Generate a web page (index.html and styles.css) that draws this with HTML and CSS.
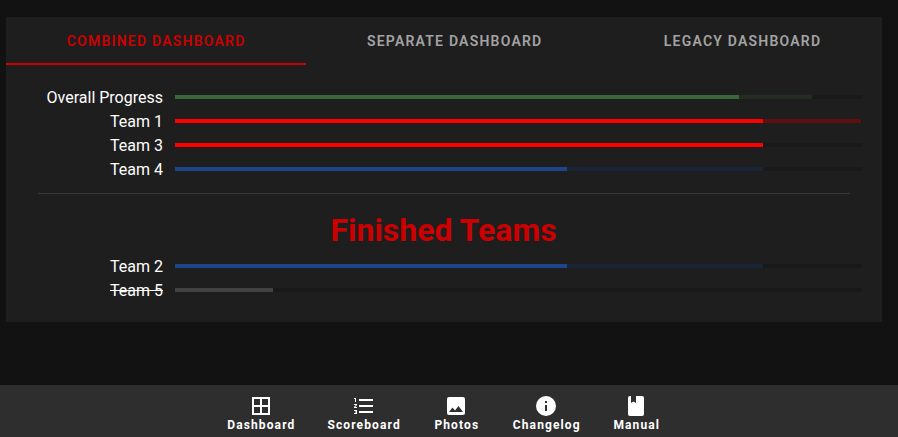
FILE: index.html
```html
<!DOCTYPE html>
<html lang="en">
<head>
<meta charset="utf-8">
<title>Dashboard</title>
<link rel="stylesheet" href="styles.css">
</head>
<body>
<main class="card">
  <div class="tabs" role="tablist">
    <div class="tab active" role="tab">Combined Dashboard</div>
    <div class="tab" role="tab">Separate Dashboard</div>
    <div class="tab" role="tab">Legacy Dashboard</div>
  </div>
  <section class="teams">
    <div class="row"><span class="label">Overall Progress</span><div class="track green"><div class="fill" style="width:82.1%"></div><div class="buffer" style="width:10.6%"></div></div></div>
    <div class="row"><span class="label">Team 1</span><div class="track red"><div class="fill" style="width:85.6%"></div><div class="buffer" style="width:14.2%"></div></div></div>
    <div class="row"><span class="label">Team 3</span><div class="track red"><div class="fill" style="width:85.6%"></div></div></div>
    <div class="row"><span class="label">Team 4</span><div class="track blue"><div class="fill" style="width:57.1%"></div><div class="buffer" style="width:28.5%"></div></div></div>
    <hr class="divider">
    <h1 class="heading">Finished Teams</h1>
    <div class="row"><span class="label">Team 2</span><div class="track blue"><div class="fill" style="width:57.1%"></div><div class="buffer" style="width:28.5%"></div></div></div>
    <div class="row"><span class="label struck">Team 5</span><div class="track grey"><div class="fill" style="width:14.3%"></div></div></div>
  </section>
</main>
<nav class="bottom-nav">
  <a class="nav-item"><svg class="icon" viewBox="0 0 24 24"><path d="M3 3v18h18V3H3zm8 16H5v-6h6v6zm0-8H5V5h6v6zm8 8h-6v-6h6v6zm0-8h-6V5h6v6z"/></svg><span>Dashboard</span></a>
  <a class="nav-item"><svg class="icon" viewBox="0 0 24 24"><path d="M2 17h2v.5H3v1h1v.5H2v1h3v-4H2v1zm1-9h1V4H2v1h1v3zm-1 3h1.8L2 13.1v.9h3v-1H3.2L5 10.9V10H2v1zm5-6v2h14V5H7zm0 14h14v-2H7v2zm0-6h14v-2H7v2z"/></svg><span>Scoreboard</span></a>
  <a class="nav-item"><svg class="icon" viewBox="0 0 24 24"><path d="M21 19V5c0-1.100-.9-2-2-2H5c-1.100 0-2 .9-2 2v14c0 1.100.9 2 2 2h14c1.100 0 2-.9 2-2zM8.500 13.500l2.500 3.010L14.500 12l4.500 6H5l3.500-4.500z"/></svg><span>Photos</span></a>
  <a class="nav-item"><svg class="icon" viewBox="0 0 24 24"><path d="M12 2a10 10 0 1 0 0 20 10 10 0 0 0 0-20zm1 15h-2v-6h2v6zm0-8h-2V7h2v2z"/></svg><span>Changelog</span></a>
  <a class="nav-item"><svg class="icon" viewBox="0 0 24 24"><path d="M6 22h12a2 2 0 0 0 2-2V4a2 2 0 0 0-2-2h-6v7L9.500 7.500 7 9V2H6a2 2 0 0 0-2 2v16a2 2 0 0 0 2 2z"/></svg><span>Manual</span></a>
</nav>
</body>
</html>
```
FILE: styles.css
```css
* { box-sizing: border-box; }

body {
  display: flex;
  flex-direction: column;
  justify-content: space-between;
  height: 437px;
  margin: 0;
  padding-top: 17px;
  overflow: hidden;
  background: #121212;
  color: #fff;
  font: 16px/24px Roboto, sans-serif;
}

.card {
  height: 305px;
  margin: 0 16px 0 6px;
  background: #1e1e1e;
}

.tabs {
  display: flex;
  height: 48px;
}

.tab {
  flex: 1 1 auto;
  display: flex;
  align-items: center;
  justify-content: center;
  padding: 2px 16px 0;
  border-bottom: 2px solid transparent;
  color: rgba(255, 255, 255, 0.6);
  font-size: 14px;
  font-weight: 600;
  letter-spacing: 1.22px;
  text-transform: uppercase;
}

.tab.active {
  border-bottom-color: #c00;
  color: #c00;
}

.teams { padding: 20px 20px 0 0; }

.row {
  display: grid;
  grid-template-columns: 157px 1fr;
  align-items: center;
  column-gap: 12px;
  height: 24px;
}

.label {
  padding-top: 2px;
  line-height: 22px;
  text-align: right;
}

.struck { text-decoration: line-through; }

.track {
  display: flex;
  height: 4px;
  background: #191919;
}

.green { --fill: #386638; --buffer: #212d20; }
.red { --fill: #f00; --buffer: #5e1010; }
.blue { --fill: #1d468a; --buffer: #192436; }
.grey { --fill: #424242; }

.fill { background: var(--fill); }
.buffer { background: var(--buffer); }

.divider {
  height: 1px;
  margin: 12px 12px 12px 32px;
  border: 0;
  background: #393939;
}

.heading {
  margin: 0 0 0 19px;
  color: #c00;
  font-size: 32px;
  font-weight: 700;
  line-height: 48px;
  text-align: center;
}

.bottom-nav {
  display: flex;
  justify-content: center;
  height: 52px;
  padding: 9px 10px 0 0;
  background: #2e2e2e;
}

.nav-item {
  display: flex;
  flex-direction: column;
  align-items: center;
  min-width: 80px;
  padding: 0 16px;
  font-size: 12px;
  font-weight: 700;
  line-height: 14px;
  letter-spacing: 1.12px;
}

.icon {
  width: 24px;
  height: 24px;
  margin-right: 1px;
  fill: currentColor;
}
```
